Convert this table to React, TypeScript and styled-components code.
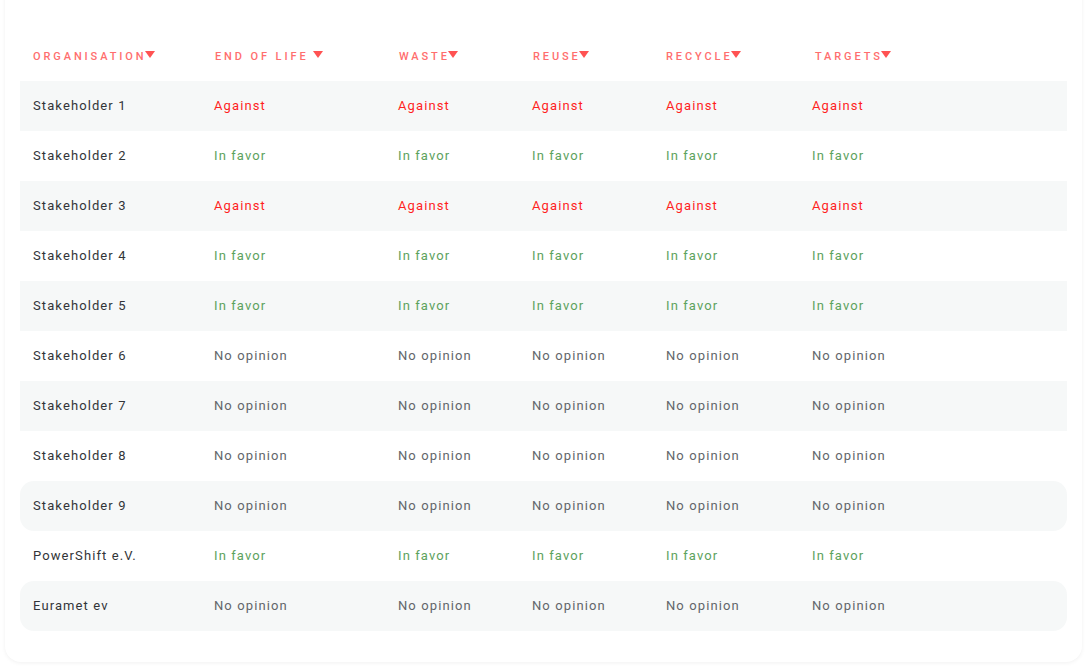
import React from 'react';
import styled, { createGlobalStyle } from 'styled-components';

const GlobalStyle = createGlobalStyle`
  html, body {
    margin: 0;
    padding: 0;
    background: #FFFFFF;
    font-family: Roboto, "Liberation Sans", sans-serif;
    overflow: hidden;
  }
`;

const Card = styled.div`
  margin: -20px 6px 10px 5px;
  padding: 50px 15px 31px 15px;
  background: #FFFFFF;
  border-radius: 16px;
  box-shadow: 0 1px 4px rgba(0, 0, 0, 0.06);
`;

const COLUMNS = '181px 184px 134px 134px 146px 1fr';

const HeaderRow = styled.div`
  display: grid;
  grid-template-columns: ${COLUMNS};
  align-items: center;
  height: 51px;
  padding-left: 13px;
`;

const HeaderCell = styled.div<{ $gap: boolean; $indent: number }>`
  display: flex;
  align-items: center;
  gap: ${props => (props.$gap ? '7px' : '1px')};
  padding-left: ${props => props.$indent}px;
  padding-top: 1px;
  font-size: 11px;
  font-weight: 500;
  letter-spacing: 2.9px;
  text-transform: uppercase;
  color: #FF6E6E;
`;

const Caret = styled.span`
  width: 0;
  height: 0;
  margin-left: -3px;
  margin-top: -3px;
  border-left: 5px solid transparent;
  border-right: 5px solid transparent;
  border-top: 7px solid #FF5252;
`;

const Row = styled.div<{ $shaded: boolean; $rounded: boolean }>`
  display: grid;
  grid-template-columns: ${COLUMNS};
  align-items: center;
  height: 50px;
  padding-left: 13px;
  padding-bottom: 1px;
  box-sizing: border-box;
  background: ${props => (props.$shaded ? '#F6F8F8' : 'transparent')};
  border-radius: ${props => (props.$rounded ? '14px' : '0')};
`;

const NameCell = styled.div`
  font-size: 13px;
  letter-spacing: 1.1px;
  color: #323538;
`;

type Vote = 'against' | 'favor' | 'none';

const voteColor: Record<Vote, string> = {
  against: '#FF1F1F',
  favor: '#5DA25D',
  none: '#62666A',
};

const voteLabel: Record<Vote, string> = {
  against: 'Against',
  favor: 'In favor',
  none: 'No opinion',
};

const VoteCell = styled.div<{ $vote: Vote }>`
  font-size: 13px;
  letter-spacing: 1.1px;
  color: ${props => voteColor[props.$vote]};
`;

const headers = [
  { label: 'Organisation', gap: false, indent: 0 },
  { label: 'End of life', gap: true, indent: 1 },
  { label: 'Waste', gap: false, indent: 1 },
  { label: 'Reuse', gap: false, indent: 1 },
  { label: 'Recycle', gap: false, indent: 0 },
  { label: 'Targets', gap: false, indent: 3 },
];

const rows: { name: string; vote: Vote }[] = [
  { name: 'Stakeholder 1', vote: 'against' },
  { name: 'Stakeholder 2', vote: 'favor' },
  { name: 'Stakeholder 3', vote: 'against' },
  { name: 'Stakeholder 4', vote: 'favor' },
  { name: 'Stakeholder 5', vote: 'favor' },
  { name: 'Stakeholder 6', vote: 'none' },
  { name: 'Stakeholder 7', vote: 'none' },
  { name: 'Stakeholder 8', vote: 'none' },
  { name: 'Stakeholder 9', vote: 'none' },
  { name: 'PowerShift e.V.', vote: 'favor' },
  { name: 'Euramet ev', vote: 'none' },
];

const App: React.FC = () => {
  return (
    <>
      <GlobalStyle />
      <Card>
        <HeaderRow>
          {headers.map(h => (
            <HeaderCell key={h.label} $gap={h.gap} $indent={h.indent}>
              {h.label}
              <Caret />
            </HeaderCell>
          ))}
        </HeaderRow>
        {rows.map((r, i) => (
          <Row key={r.name} $shaded={i % 2 === 0} $rounded={i >= 8}>
            <NameCell>{r.name}</NameCell>
            {[0, 1, 2, 3, 4].map(c => (
              <VoteCell key={c} $vote={r.vote}>
                {voteLabel[r.vote]}
              </VoteCell>
            ))}
          </Row>
        ))}
      </Card>
    </>
  );
};

export default App;
